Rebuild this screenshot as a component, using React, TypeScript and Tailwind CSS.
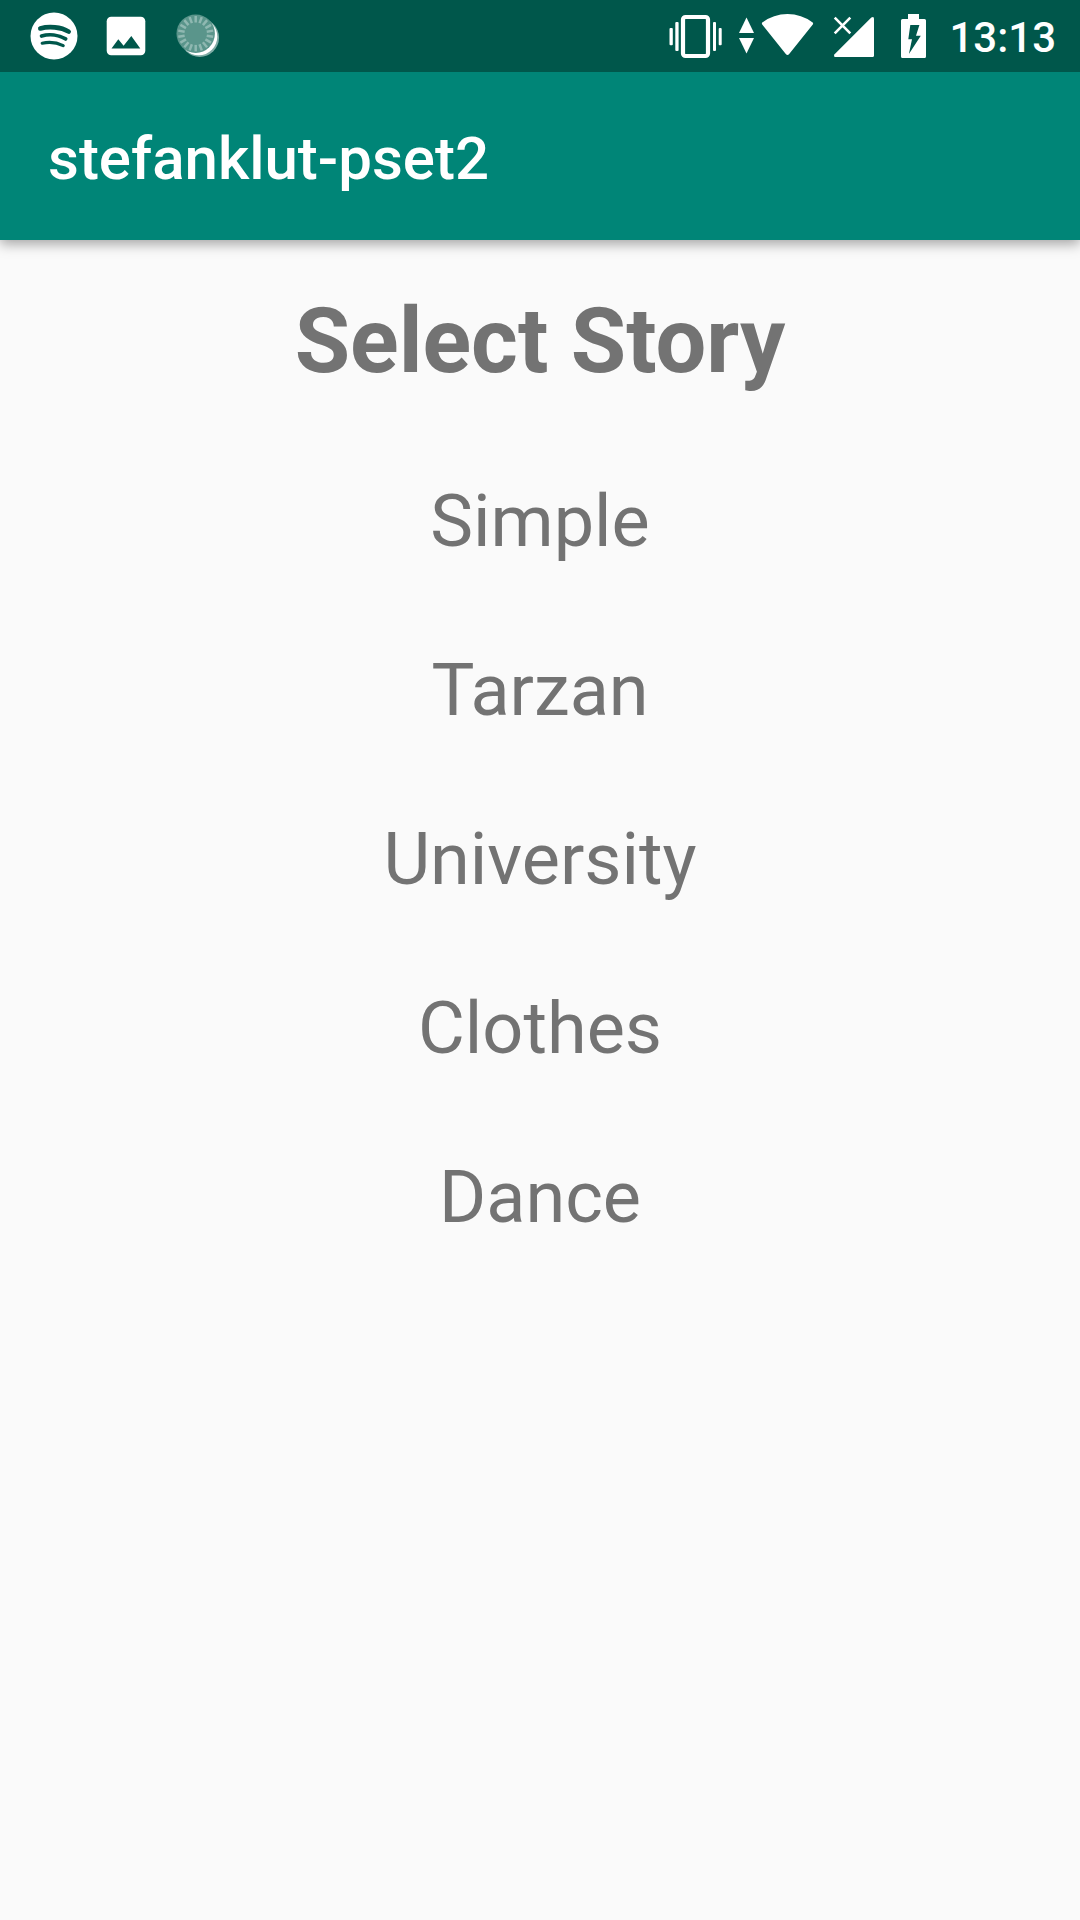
const stories = ["Simple", "Tarzan", "University", "Clothes", "Dance"];

const ticks = Array.from({ length: 18 }, (_, i) => i * 20);

function NotificationIcons() {
  return (
    <div className="flex gap-6">
      <svg className="size-12" viewBox="0 0 48 48" fill="none" role="img" aria-label="Spotify">
        <circle cx="24" cy="24" r="23.500" fill="white" />
        <g stroke="#00574b" strokeLinecap="round">
          <path d="M10.300 16.500C19 14 31 15 38.700 19.600" strokeWidth="4.600" />
          <path d="M11.600 24C19 21.800 28.500 22.800 35.600 26.900" strokeWidth="3.800" />
          <path d="M12.200 31.200C19 29.600 26.500 30.300 33.200 33.600" strokeWidth="3.200" />
        </g>
      </svg>
      <svg className="size-12" viewBox="0 0 48 48" role="img" aria-label="Screenshot">
        <rect x="4.700" y="4.700" width="38.600" height="38.600" rx="4.500" fill="white" />
        <path d="M9.500 36.500L16.300 27.200L21.600 33.700L29.300 24L38.300 36.500Z" fill="#00574b" />
      </svg>
      <svg className="size-12" viewBox="0 0 48 48" fill="none" role="img" aria-label="Syncing">
        <circle cx="25.700" cy="25.700" r="19.300" fill="#7fada6" />
        <circle cx="24.700" cy="24.700" r="18.600" fill="white" />
        <circle cx="21.700" cy="21.700" r="19.200" fill="#5a958b" />
        <g stroke="#8fb8b1" strokeWidth="2.500">
          {ticks.map((a) => (
            <path key={a} d="M21.700 4v6.500" transform={`rotate(${a} 21.7 21.7)`} />
          ))}
        </g>
      </svg>
    </div>
  );
}

function SystemIcons() {
  return (
    <div className="flex gap-4">
      <svg className="h-18 w-14" viewBox="0 0 56 72" fill="white" role="img" aria-label="Vibrate">
        <rect x="17" y="17" width="25" height="39" rx="2.500" fill="none" stroke="white" strokeWidth="4.200" />
        <rect x="3.500" y="28" width="3.300" height="17.300" rx="1" />
        <rect x="9.300" y="22" width="3.300" height="29" rx="1" />
        <rect x="47" y="22" width="3" height="29" rx="1" />
        <rect x="52.700" y="28" width="3" height="17.300" rx="1" />
      </svg>
      <svg className="h-18 w-19" viewBox="0 0 76 72" fill="white" role="img" aria-label="Wi-Fi">
        <path d="M8.500 17.500L16 33H1Z" />
        <path d="M8.500 53.500L16 38H1Z" />
        <path d="M24.300 22.600Q35.500 14.100 49.500 14.100T74.700 22.600Q75.500 23.500 74.800 24.600L51.200 54Q49.500 56.200 47.800 54L24.200 24.600Q23.500 23.500 24.300 22.600Z" />
      </svg>
      <svg className="h-18 w-12" viewBox="0 0 48 72" fill="white" role="img" aria-label="No mobile signal">
        <path d="M41.300 17.600Q44 15.800 44 19V55.500Q44 57 42.500 57H5.500Q3 57 4.600 54.300Z" />
        <path d="M4.700 17.700L20.300 33.300M20.300 17.700L4.700 33.300" stroke="white" strokeWidth="2.600" />
      </svg>
      <svg className="h-18 w-9" viewBox="0 0 36 72" fill="white" role="img" aria-label="Battery charging">
        <path
          fillRule="evenodd"
          d="M14 14H25V19H30.500Q32 19 32 20.500V56.500Q32 58 30.500 58H8.500Q7 58 7 56.500V20.500Q7 19 8.500 19H14ZM16.300 25L14.300 39.300H18L14.900 54L26.800 35.700H22L25.400 25Z"
        />
      </svg>
    </div>
  );
}

function StatusBar() {
  return (
    <div className="relative z-10 flex h-18 items-center justify-between bg-[#00574b] pr-6 pl-[30px] text-white">
      <NotificationIcons />
      <div className="flex items-center gap-[19px]">
        <SystemIcons />
        <time className="pt-1 text-[42px] leading-none font-medium">13:13</time>
      </div>
    </div>
  );
}

export default function App() {
  return (
    <div className="min-h-screen bg-[#fafafa] font-['Roboto',sans-serif]">
      <StatusBar />
      <header className="flex h-42 items-center bg-[#008577] px-12 pt-1.5 shadow-[0_4px_12px_rgba(0,0,0,0.35)]">
        <h1 className="text-[60px] leading-none font-medium text-white">stefanklut-pset2</h1>
      </header>
      <main className="flex flex-col items-center pt-12 text-[#737373]">
        <h2 className="text-[90px] leading-[108px] font-bold">Select Story</h2>
        <ul className="mt-[41px] w-full">
          {stories.map((story) => (
            <li key={story}>
              <button type="button" className="h-[169px] w-full text-[72px]">
                {story}
              </button>
            </li>
          ))}
        </ul>
      </main>
    </div>
  );
}
